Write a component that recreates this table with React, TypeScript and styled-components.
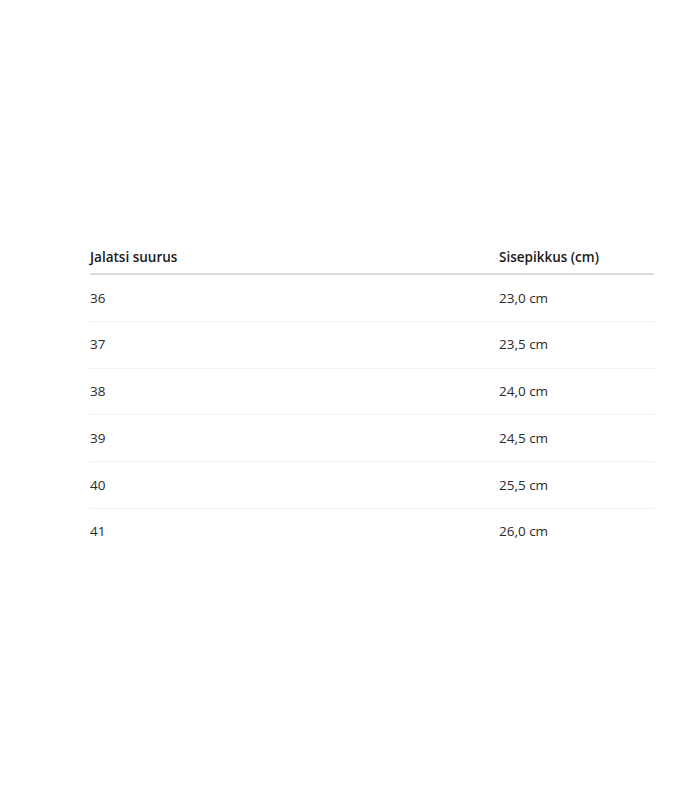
import React from "react";
import styled, { createGlobalStyle } from "styled-components";

const sizes = [
    { size: "36", length: "23,0 cm" },
    { size: "37", length: "23,5 cm" },
    { size: "38", length: "24,0 cm" },
    { size: "39", length: "24,5 cm" },
    { size: "40", length: "25,5 cm" },
    { size: "41", length: "26,0 cm" },
];

const App = () => {
    return (
        <>
            <GlobalStyle />
            <Page>
                <Table>
                    <thead>
                        <tr>
                            <Head>Jalatsi suurus</Head>
                            <Head>Sisepikkus (cm)</Head>
                        </tr>
                    </thead>
                    <tbody>
                        {sizes.map((row) => (
                            <Row key={row.size}>
                                <Cell>{row.size}</Cell>
                                <Cell>{row.length}</Cell>
                            </Row>
                        ))}
                    </tbody>
                </Table>
            </Page>
        </>
    );
};

export default App;

const GlobalStyle = createGlobalStyle`
    body {
        margin: 0;
        background: #fff;
        font-family: "Open Sans", "Noto Sans", sans-serif;
        color: #222;
    }
`;

const Page = styled.div`
    width: 700px;
    height: 800px;
    padding: 239px 46px 0 90px; /* tabel keskel */
    box-sizing: border-box;
`;

const Table = styled.table`
    width: 564px;
    border-collapse: collapse;
    font-size: 13.5px;
`;

const Head = styled.th`
    text-align: left;
    font-weight: 600;
    padding: 8px 0 6px;
    line-height: 20px;
    border-bottom: 2px solid #dcdcdc;
    color: #1a1a1a;

    &:first-child {
        width: 409px;
    }
`;

const Row = styled.tr`
    border-bottom: 1px solid #f0f0f0;

    &:last-child {
        border-bottom: none;
    }
`;

const Cell = styled.td`
    padding: 13.5px 0 12.5px;
    line-height: 19.75px;
    color: #2a2a2a;
`;
